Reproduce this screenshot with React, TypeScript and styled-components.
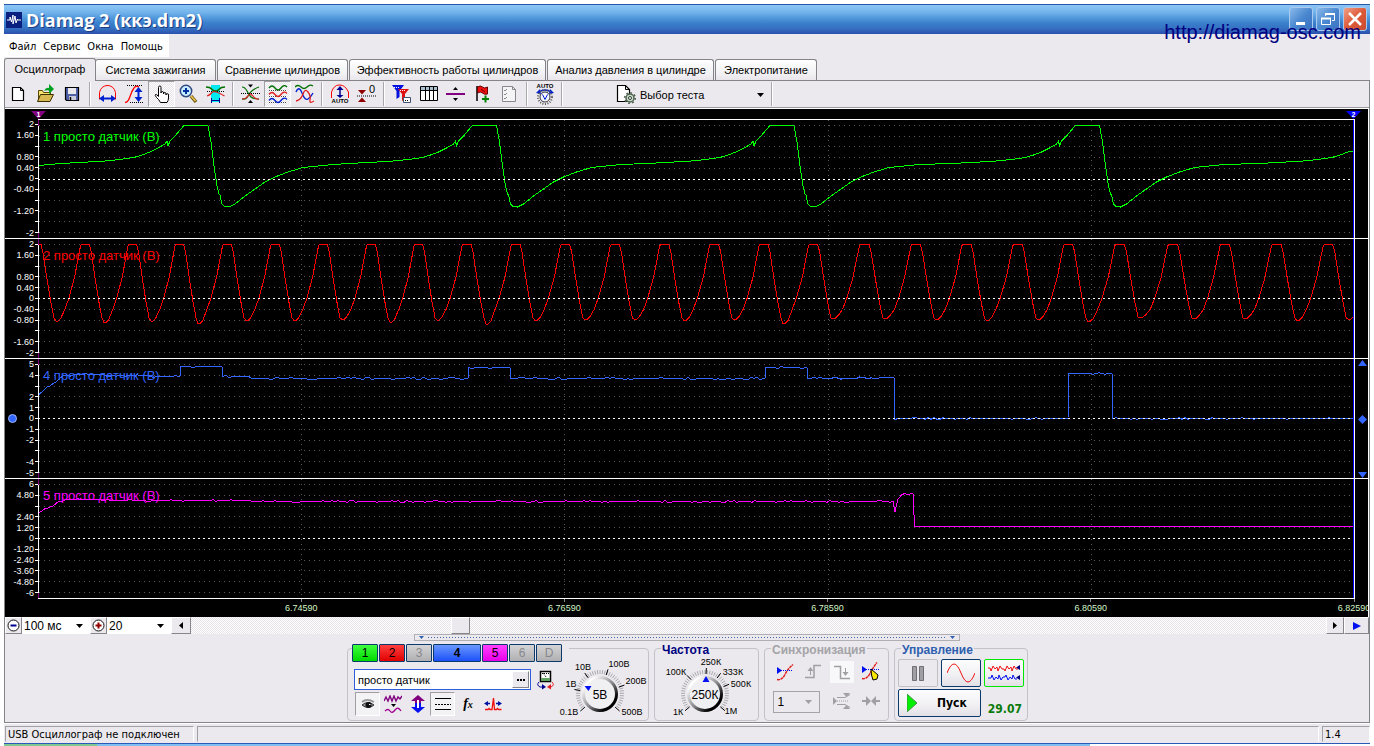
import React from 'react';
import styled, { createGlobalStyle, css } from 'styled-components';

const face = '#ebe9ed';
const sans = '"Liberation Sans", Arial, sans-serif';
const tahoma = '"DejaVu Sans Condensed", "DejaVu Sans", Tahoma, sans-serif';

const dither = css`
  background: repeating-conic-gradient(#ffffff 0 25%, #e6e4e8 0 50%) 0 0 / 2px 2px;
`;
const raised = css`
  background: ${face};
  border: 1px solid;
  border-color: #ffffff #85858a #85858a #ffffff;
`;

const GlobalStyle = createGlobalStyle`
  * { box-sizing: border-box; }
  body { margin: 0; background: #ffffff; font: 11px ${sans}; color: #000000; }
  button, input, select { font: inherit; color: inherit; margin: 0; padding: 0; }
  button { cursor: default; }
  svg { display: block; }
`;

/* ---------- window frame ---------- */

const Frame = styled.div`
  position: relative;
  margin: 4px 4px 0;
  background: ${face};
  min-width: 1100px;
`;
const TitleBar = styled.header`
  display: flex;
  align-items: center;
  height: 30px;
  padding: 0 3px 0 2px;
  border-top: 1px solid #2a56a8;
  background: linear-gradient(#8cc6f4, #74b4ec 25%, #559cde 42%, #3a80cc 62%, #3672c2 80%, #2a4fae 100%);
`;
const Title = styled.h1`
  flex: 1;
  margin: 0 0 0 4px;
  font: 700 18px/26px 'Open Sans', 'Noto Sans', sans-serif;
  color: #ffffff;
  text-shadow: 1px 1px 0 #1a3c80;
`;
const WindowButtons = styled.div`
  display: flex;
  gap: 3px;
  padding-bottom: 2px;
`;
const WindowButton = styled.button<{ $close?: boolean }>`
  width: 24px;
  height: 24px;
  display: grid;
  place-items: center;
  border: 1px solid #a9c9ee;
  border-radius: 3px;
  background: ${p => (p.$close
    ? 'linear-gradient(135deg, #f0a088, #dd5a38 50%, #c84a30)'
    : 'linear-gradient(135deg, #8abaea, #4a88d0 50%, #3a70c0)')};
`;
const SiteLink = styled.a`
  position: absolute;
  top: 17px;
  right: 9px;
  font: 20px/22px ${sans};
  color: #000080;
  text-decoration: none;
`;
const MenuRow = styled.nav`
  height: 24px;
  display: flex;
`;
const MenuBar = styled.div`
  display: flex;
  align-items: center;
  gap: 7px;
  height: 23px;
  padding: 3px 6px 0 5px;
  background: #ffffff;
`;
const MenuItem = styled.button`
  border: 0;
  background: none;
  font: 11px/16px ${tahoma};
`;

/* ---------- tabs ---------- */

const TabList = styled.div`
  display: flex;
  align-items: flex-end;
  gap: 1px;
  height: 23px;
  border-bottom: 1px solid #848488;
`;
const Tab = styled.button<{ $w: number; $active?: boolean }>`
  width: ${p => p.$w}px;
  height: ${p => (p.$active ? 23 : 21)}px;
  margin-bottom: ${p => (p.$active ? -1 : 0)}px;
  margin-right: ${p => (p.$active ? -2 : 0)}px;
  padding: ${p => (p.$active ? '0 0 3px' : '0')};
  border: 1px solid #848488;
  border-bottom: 0;
  border-radius: 3px 3px 0 0;
  background: ${p => (p.$active ? face : 'linear-gradient(#ffffff, #f1f0f3 70%, #e8e6ea)')};
  white-space: nowrap;
`;

/* ---------- toolbar ---------- */

const Page = styled.main`
  border: solid #848488;
  border-width: 0 1px;
`;
const Toolbar = styled.div`
  display: flex;
  align-items: center;
  height: 27px;
  border-bottom: 1px solid #9a9a9e;
`;
const ToolButton = styled.button<{ $on?: boolean }>`
  width: 27px;
  height: 26px;
  display: grid;
  place-items: center;
  border: 1px solid transparent;
  background: none;
  ${p => p.$on && css`
    ${dither}
    border-color: #a0a0a4 #ffffff #ffffff #a0a0a4;
  `}
`;
const Separator = styled.span`
  width: 2px;
  height: 24px;
  margin: 0 3px;
  border-left: 1px solid #a8a8ac;
  border-right: 1px solid #ffffff;
`;
const TestPicker = styled.label`
  display: flex;
  align-items: center;
  gap: 4px;
  width: 202px;
  padding-left: 50px;
`;
const PickerWrap = styled.span`
  display: flex;
  align-items: center;
  flex: 1;
  padding: 2px 4px 0 0;
`;
const PlainSelect = styled.select`
  flex: 1;
  min-width: 0;
  height: 16px;
  border: 0;
  appearance: none;
  background: none;
  outline: 0;
`;

/* ---------- oscilloscope ---------- */

const Scope = styled.section`
  border-top: 1px solid #ffffff;
  border-right: 1px solid #ffffff;
  background: #000000;
  overflow: hidden;
`;
const FlagStrip = styled.div`
  display: flex;
  justify-content: space-between;
  align-items: flex-end;
  height: 10px;
  padding: 0 7px 0 26px;
`;
const ChannelRow = styled.div`
  display: grid;
  grid-template-columns: 33px 1fr 13px;
  height: 120px;
`;
const AxisCell = styled.div<{ $last?: boolean }>`
  display: flex;
  align-items: center;
  border-bottom: 1px solid ${p => (p.$last ? '#000000' : '#ffffff')};
`;
const Marker = styled.span`
  width: 8px;
  margin-left: 3px;
`;
const Scale = styled.ol`
  flex: 1;
  display: flex;
  flex-direction: column;
  height: 100%;
  margin: 0;
  padding: 0;
  list-style: none;
`;
const ScaleMark = styled.li`
  flex: 1;
  min-height: 0;
  display: flex;
  align-items: center;
  justify-content: flex-end;
  color: #ffffff;
  font: 9px/10px ${sans};
  white-space: nowrap;
  &::after {
    content: '';
    width: 3px;
    height: 1px;
    margin-left: 1px;
    background: #ffffff;
  }
`;
const PlotCell = styled.div<{ $first?: boolean }>`
  position: relative;
  min-width: 0;
  border-top: ${p => (p.$first ? '1px solid #ffffff' : '0')};
  border-right: 1px solid #ffffff;
  border-bottom: 1px solid #ffffff;
`;
const PlotSvg = styled.svg`
  width: 100%;
  height: 100%;
  shape-rendering: crispEdges;
  fill: none;
  path, line { vector-effect: non-scaling-stroke; }
`;
const ChannelName = styled.span<{ $color: string }>`
  position: absolute;
  left: 5px;
  top: 9px;
  font: 13px/16px ${sans};
  color: ${p => p.$color};
`;
const Gutter = styled.div<{ $last?: boolean }>`
  display: flex;
  flex-direction: column;
  align-items: center;
  justify-content: space-between;
  padding: 1px 0 0 2px;
  border-bottom: 1px solid ${p => (p.$last ? '#000000' : '#ffffff')};
`;
const TimeAxis = styled.div`
  display: grid;
  grid-template-columns: repeat(5, 1fr);
  height: 18px;
  padding: 0 14px 0 33px;
`;
const TimeMark = styled.span`
  display: flex;
  flex-direction: column;
  align-items: center;
  width: 40px;
  margin-right: -20px;
  justify-self: end;
  color: #d4f4c8;
  font: 9px/10px ${sans};
  &::before {
    content: '';
    width: 1px;
    height: 3px;
    margin-bottom: 1px;
    background: #888888;
  }
`;

/* ---------- scroll row ---------- */

const ScrollRow = styled.div`
  display: flex;
  height: 17px;
`;
const SmallButton = styled.button<{ $w: number }>`
  ${raised}
  width: ${p => p.$w}px;
  height: 17px;
  flex: none;
  display: grid;
  place-items: center;
`;
const SelectBox = styled.label<{ $w: number }>`
  display: flex;
  align-items: center;
  width: ${p => p.$w}px;
  padding: 0 7px 0 2px;
  background: #ffffff;
  font-size: 12px;
`;
const Track = styled.div`
  ${dither}
  flex: 1;
  display: flex;
`;
const TrackGap = styled.span<{ $grow: number }>`
  flex: ${p => p.$grow} 0 0;
`;
const Thumb = styled.span`
  ${raised}
  width: 19px;
`;

/* ---------- control panel ---------- */

const Controls = styled.section`
  display: flex;
  flex-direction: column;
  align-items: center;
  height: 89px;
  border-bottom: 1px solid #848488;
`;
const Splitter = styled.div`
  display: flex;
  align-items: center;
  gap: 4px;
  width: 546px;
  height: 7px;
  padding: 0 4px;
  border: 1px solid #b0b0b4;
`;
const Dots = styled.span`
  flex: 1;
  height: 1px;
  background: repeating-linear-gradient(90deg, #3f68b0 0 1px, transparent 1px 3px);
`;
const Groups = styled.div`
  display: flex;
  align-items: flex-end;
  gap: 5px;
  height: 80px;
  padding-left: 1px;
`;
const ChannelGroup = styled.section`
  display: flex;
  width: 302px;
  height: 73px;
  border: 1px solid #c2c2c8;
  border-radius: 4px;
`;
const ChannelLeft = styled.div`
  width: 207px;
  flex: none;
  padding-left: 4px;
`;
const ChannelTabs = styled.div`
  display: flex;
  gap: 1px;
  width: 217px;
  margin-top: -5px;
  background: ${face};
`;
const ChannelTab = styled.button<{ $from: string; $to: string; $wide?: boolean; $off?: boolean }>`
  width: ${p => (p.$wide ? 48 : 26)}px;
  height: 18px;
  border: 1px solid #0a3a6c;
  border-radius: 1px;
  background: linear-gradient(${p => p.$from}, ${p => p.$to});
  font: ${p => (p.$wide ? 700 : 400)} 12px/14px ${sans};
  color: ${p => (p.$off ? '#88888c' : '#000000')};
`;
const NameRow = styled.div`
  display: flex;
  align-items: center;
  gap: 5px;
  margin: 7px 0 2px 2px;
`;
const NameField = styled.div`
  display: flex;
  align-items: center;
  width: 177px;
  height: 21px;
  padding: 1px;
  border: 1px solid #2f5fd8;
  background: #ffffff;
`;
const NameInput = styled.input`
  flex: 1;
  min-width: 0;
  padding-left: 2px;
  border: 0;
  outline: 0;
  background: none;
`;
const DotsButton = styled.button`
  ${raised}
  width: 17px;
  height: 17px;
  display: grid;
  place-items: center;
`;
const ChannelTools = styled.div`
  display: flex;
  padding-left: 3px;
`;
const ChannelTool = styled.button<{ $on?: boolean }>`
  width: 25px;
  height: 24px;
  display: grid;
  place-items: center;
  border: 1px solid transparent;
  background: none;
  ${p => p.$on && css`
    background: #f3f2f5;
    border-color: #a0a0a4 #ffffff #ffffff #a0a0a4;
  `}
`;
const Group = styled.fieldset<{ $w: number }>`
  width: ${p => p.$w}px;
  height: 80px;
  min-width: 0;
  margin: 0;
  padding: 0;
  border: 1px solid #c2c2c8;
  border-radius: 4px;
`;
const Legend = styled.legend<{ $color: string }>`
  height: 14px;
  margin-left: 6px;
  padding: 2px 1px 0;
  font: 700 12px/14px ${sans};
  color: ${p => p.$color};
`;
const KnobSvg = styled.svg`
  font: 9px ${sans};
`;
const SyncGrid = styled.div`
  display: grid;
  grid-template-columns: 28px 28px 30px 28px;
  justify-items: center;
  align-items: center;
  grid-template-rows: 30px 28px;
  padding: 2px 0 0 6px;
`;
const SyncButton = styled.button<{ $on?: boolean }>`
  width: 24px;
  height: 22px;
  display: grid;
  place-items: center;
  border: 0;
  background: ${p => (p.$on ? '#f8f8fa' : 'none')};
`;
const SyncSelect = styled.label`
  grid-column: span 2;
  display: flex;
  align-items: center;
  width: 47px;
  height: 22px;
  padding: 0 7px 0 4px;
  margin: 2px 6px 0 0;
  border: 1px solid #a4a4a8;
  font-size: 12px;
`;
const RunGrid = styled.div`
  display: grid;
  grid-template-columns: 40px 40px 40px;
  grid-template-rows: 28px 28px;
  gap: 2px 3px;
  padding: 4px 0 0 3px;
`;
const RunButton = styled.button<{ $edge: string; $span?: boolean }>`
  grid-column: span ${p => (p.$span ? 2 : 1)};
  display: flex;
  align-items: center;
  justify-content: ${p => (p.$span ? 'flex-start' : 'center')};
  gap: 19px;
  padding-left: ${p => (p.$span ? 8 : 0)}px;
  border: 1px solid ${p => p.$edge};
  border-radius: 2px;
  background: linear-gradient(#fdfdfe, #f0eff2 60%, #e2e0e6);
  font: 700 12px/16px ${tahoma};
`;
const PauseButton = styled(RunButton)`
  background: ${face};
`;
const Reading = styled.output`
  align-self: center;
  justify-self: end;
  padding: 12px 2px 0 0;
  font: 700 12px/16px ${tahoma};
  color: #0a7a0a;
`;

/* ---------- status bar ---------- */

const StatusBar = styled.footer`
  display: flex;
  gap: 3px;
  height: 20px;
  padding: 2px 0 1px 1px;
  border-top: 1px solid #ffffff;
`;
const StatusCell = styled.div<{ $w?: number }>`
  flex: ${p => (p.$w ? `0 0 ${p.$w}px` : '1')};
  padding-left: 2px;
  border: 1px solid;
  border-color: #a0a0a4 #ffffff ${face} #a0a0a4;
  font: 11px/15px ${tahoma};
`;
const Taskbar = styled.div`
  display: flex;
  height: 4px;
  border-top: 1px solid #2c58b8;
  background: #ffffff;
`;
const TaskPart = styled.span<{ $grow: number; $color: string }>`
  flex: ${p => p.$grow} 0 0;
  background: ${p => p.$color};
`;

/* ---------- wave data (plot units: x 0..1316, y from the row top) ---------- */

type Pt = [number, number];

const toPath = (pts: Pt[]) => 'M' + pts.map(([x, y]) => `${x.toFixed(1)} ${y.toFixed(1)}`).join('L');

function crankWave(): Pt[] {
  const rise: Pt[] = [[-148, 43.5], [-128, 42.5], [-103, 41], [-88, 39.5], [-74, 37.5], [-66, 35], [-58, 32],
    [-50, 28], [-43, 24], [-41, 21], [-40, 26], [-38, 21], [-33, 16], [-28, 10], [-24, 5.5]];
  const fall: Pt[] = [[0, 5.5], [3, 22], [6, 46], [9, 66], [11, 74], [12, 75], [14, 84], [16, 86], [21, 87], [27, 84],
    [37, 76], [47, 69], [57, 62], [67, 57], [80, 52], [95, 47.5], [110, 46], [125, 44.5]];
  const pts: Pt[] = [[1, 45.5]];
  [170, 458.5, 756, 1061.5, 1368].forEach((t, i) => {
    rise.forEach(([dx, y]) => t + dx > pts[pts.length - 1][0] && pts.push([t + dx, y]));
    if (i < 4) fall.forEach(([dx, y]) => pts.push([t + dx, y]));
  });
  return [...pts.filter(([x]) => x < 1314), [1315, 31]];
}

function camWave(): Pt[] {
  const troughs: Pt[] = [[19, 82], [67, 83.5], [114, 82], [161, 84.5], [209, 81.5], [257, 81.5], [305, 80.5],
    [353, 83], [400, 81], [449, 85], [498, 81.5], [548, 80.5], [597.5, 80.5], [647, 81.5], [697, 80.5], [746, 84.5],
    [796, 79.5], [848, 79.5], [899, 80.5], [949.5, 81.5], [1001, 80.5], [1051, 82.5], [1103.5, 78.5], [1157, 79.5],
    [1208, 79.5], [1260, 81.5], [1311.5, 80.5], [1363, 80.5]];
  const pts: Pt[] = [[1, 5.5], [3, 5.5], [5, 14], [9, 40], [13, 64], [16, 79]];
  troughs.slice(0, -1).forEach(([x, y], i) => {
    const k = (troughs[i + 1][0] - x) / 49;
    const at = (dx: number, v: number) => pts.push([x + dx * k, v]);
    at(-1, y); at(1, y); at(4, y - 3); at(8, 70.5); at(12, 59.5); at(18, 38); at(22, 17); at(24, 7);
    at(25, 5.5); at(33, 5.5); at(35, 13); at(39, 40); at(43, 64); at(46, 79);
  });
  return pts.filter(([x]) => x < 1316);
}

function noisy(keys: Pt[], amp: (x: number) => number): Pt[] {
  let seed = 7;
  const rand = () => (seed = (seed * 16807) % 2147483647) / 2147483647;
  const pts: Pt[] = [];
  keys.forEach(([x, y], i) => {
    pts.push([x, y]);
    const next = keys[i + 1];
    if (!next) return;
    for (let s = x + 3; s < next[0] - 1; s += 3) {
      const base = y + ((next[1] - y) * (s - x)) / (next[0] - x);
      pts.push([s, base + (rand() > 0.72 ? (rand() > 0.5 ? 1 : -1) * amp(s) : 0)]);
    }
  });
  return pts;
}

const wave4 = noisy([[1, 35.5], [6, 31], [12, 27], [22, 19], [26, 16.5], [42, 15.5], [90, 16.5], [140, 17.5], [142, 17.5],
  [143, 7.5], [184, 7.5], [185, 17.5], [207, 17.5], [215, 19.5], [250, 19.5], [430, 19.5], [431, 8.5], [472, 8.5], [473, 19.5],
  [727, 19.5], [728, 8.5], [769, 8.5], [770, 19.5], [856, 18.5], [857, 60.5], [860, 59.5], [1029, 59.5], [1030, 59],
  [1031, 14.5], [1074, 14.5], [1075, 59.5], [1316, 59.5]], x => (x > 857 ? 0.7 : 1.1));

const wave5 = noisy([[1, 33.5], [12, 28], [22, 22], [28, 20.5], [50, 20.5], [100, 21.5], [207, 21.5], [222, 22.5], [855, 22.5],
  [857, 32.5], [860, 20], [864, 15.5], [875, 15], [876, 36], [877, 47.5], [1316, 47.5]], x => (x > 876 ? 0 : 0.9));

interface Channel {
  name: string;
  color: string;
  marks: string[];
  pts: Pt[];
}

const channels: Channel[] = [
  { name: '1 просто датчик (В)', color: '#00ff00', pts: crankWave(),
    marks: ['2', '1.60', '', '0.80', '0.40', '0', '-0.40', '', '-1.20', '', '-2'] },
  { name: '2 просто датчик (В)', color: '#ff0000', pts: camWave(),
    marks: ['2', '1.60', '', '0.80', '0.40', '0', '-0.40', '-0.80', '', '-1.60', '-2'] },
  { name: '4 просто датчик (В)', color: '#3366ff', pts: wave4,
    marks: ['5', '4', '', '2', '1', '0', '-1', '-2', '', '-4', '-5'] },
  { name: '5 просто датчик (В)', color: '#ff00ff', pts: wave5,
    marks: ['6', '4.80', '', '2.40', '1.20', '0', '-1.20', '-2.40', '-3.60', '-4.80', '-6'] },
];

function ScopeRow({ ch, index }: { ch: Channel; index: number }) {
  const first = index === 0;
  const last = index === channels.length - 1;
  const selected = index === 2;
  const h = first ? 118 : 119;
  const rows = ch.marks.map((_, i) => Math.floor(((i + 0.5) * h) / 11) + 0.5);
  return (
    <ChannelRow>
      <AxisCell $last={last}>
        <Marker>
          {selected && (
            <svg width="9" height="9" viewBox="0 0 9 9"><circle cx="4.5" cy="4.5" r="4" fill="#3366ff" stroke="#a0b8f8" /></svg>
          )}
        </Marker>
        <Scale>{ch.marks.map((m, i) => <ScaleMark key={i}>{m}</ScaleMark>)}</Scale>
      </AxisCell>
      <PlotCell $first={first}>
        <PlotSvg viewBox={`0 0 1316 ${h}`} preserveAspectRatio="none" aria-label={ch.name}>
          {rows.map((y, i) => i !== 5 && (
            <line key={i} x1="1" x2="1315" y1={y} y2={y} stroke="#585858" strokeDasharray="1 4" />
          ))}
          {[263.5, 526.5, 790.5, 1053.5].map(x => (
            <line key={x} x1={x} x2={x} y1="0" y2={h} stroke="#585858" strokeDasharray="1 4" />
          ))}
          <line x1="0.5" x2="0.5" y1="0" y2={h} stroke="#800080" />
          <line x1="0.5" x2="0.5" y1={rows[0]} y2={rows[10]} stroke="#ffffff" />
          <path d={toPath(ch.pts)} stroke={ch.color} />
          <line x1="0" x2="1315" y1={rows[5]} y2={rows[5]} stroke="#ffffff" strokeDasharray="2 3" />
          <line x1="1315.5" x2="1315.5" y1="0" y2={h} stroke="#0000ff" />
        </PlotSvg>
        <ChannelName $color={ch.color}>{ch.name}</ChannelName>
      </PlotCell>
      <Gutter $last={last}>
        {selected && (
          <>
            <svg width="9" height="6"><path d="M4.5 0L9 6H0z" fill="#3366ff" /></svg>
            <svg width="9" height="9"><path d="M4.5 0L9 4.5 4.5 9 0 4.5z" fill="#3366ff" /></svg>
            <svg width="9" height="6"><path d="M0 0H9L4.5 6z" fill="#3366ff" /></svg>
          </>
        )}
      </Gutter>
    </ChannelRow>
  );
}

/* ---------- icons ---------- */

const Icon = ({ children, w = 20, h = 20 }: { children: React.ReactNode; w?: number; h?: number }) => (
  <svg width={w} height={h} viewBox={`0 0 ${w} ${h}`} fill="none" stroke="#000" aria-hidden="true">{children}</svg>
);
const Caret = ({ color = '#000' }: { color?: string }) => (
  <svg width="7" height="4" viewBox="0 0 7 4" aria-hidden="true"><path d="M0 0h7L3.5 4z" fill={color} /></svg>
);

const NewIcon = () => <Icon><path d="M3.500 3.500h8l3 3v10h-11z" fill="#fff" strokeWidth="1.200" /><path d="M11.500 3.500v3h3" /></Icon>;
const OpenIcon = () => (
  <Icon>
    <path d="M2.500 17V6.500h4l1 2h7v3" fill="#f5e070" stroke="#5a4a00" />
    <path d="M1.500 17.500l3-7h13l-3.500 7z" fill="#d8b850" stroke="#3a3000" />
    <path d="M8 7q2-4 5-3V0l5 5-5 5V6.500q-3-.5-5 .5z" fill="#00a020" stroke="none" />
  </Icon>
);
const SaveIcon = () => (
  <Icon>
    <path d="M2.500 3.500h13v13h-12l-1-1z" fill="#5060a8" strokeWidth="1.200" />
    <path d="M5 4h8v6H5z" fill="#e8e8ec" stroke="none" />
    <path d="M6 12h7v4H6z" fill="#c8ccd8" stroke="none" /><path d="M7.500 13v3" strokeWidth="1.500" />
  </Icon>
);
const PeriodIcon = () => (
  <Icon>
    <path d="M1.500 15.500V8.500Q3 2 9 1.500h1Q16 2 17.500 8.500v7" stroke="#f00" />
    <path d="M3 14.500h13" stroke="#0020d0" strokeWidth="2" /><path d="M1 14.500l5-3.500v7zM18 14.500l-5-3.500v7z" fill="#0020d0" stroke="none" />
  </Icon>
);
const AmplitudeIcon = () => (
  <Icon>
    <path d="M2 1.500h16M5 18.500h13" strokeDasharray="1 1" />
    <path d="M0 18.500q3 0 5-6t4-8.500Q11 1 14 3" stroke="#f00" strokeWidth="1.300" />
    <path d="M13.500 5v11" stroke="#0020d0" strokeWidth="2" /><path d="M13.500 3l4 5h-8zM13.500 18l4-5h-8z" fill="#0020d0" stroke="none" />
  </Icon>
);
const HandIcon = () => (
  <Icon>
    <path d="M6.500 12V3.500q0-1.500 1.300-1.500T9 3.500V9q0-1.500 1.300-1.500T11.500 9v1q0-1.500 1.300-1.500T14 10v1q0-1.300 1.300-1.300T16.500 11v3q0 2.500-1.500 4.500H8.500Q7 15.500 4.500 13.500 2.500 11 3.500 10.500q1-.5 3 2z" fill="#fff" />
  </Icon>
);
const ZoomIcon = () => (
  <Icon>
    <path d="M12 12l5 6" stroke="#705810" strokeWidth="3.500" /><path d="M12 12l4.500 5" stroke="#f0c850" strokeWidth="1.500" />
    <circle cx="7" cy="7" r="5.700" fill="#c8ecff" stroke="#304880" strokeWidth="1.500" />
    <path d="M4 7h6M7 4v6" stroke="#0030a0" strokeWidth="2" />
  </Icon>
);
const FilterWaveIcon = () => (
  <Icon>
    <path d="M5 1h9v17H5z" fill="#00e8f0" stroke="none" />
    <path d="M0 3q4 0 5.500 2t4 2 4-2T19 3" stroke="#007000" strokeWidth="1.300" />
    <path d="M1 7.500h18" strokeDasharray="1 1" />
    <path d="M1 12q3-1 4.500-3T10 8t4 1.500 4.500 2.500" stroke="#e02020" strokeWidth="1.300" />
    <path d="M5.500 16.500h8M5.500 14v5M13.500 14v5" stroke="#000090" />
  </Icon>
);
const CrossWaveIcon = () => (
  <Icon>
    <path d="M1 3q3 0 5 4t4 6 8 2" stroke="#007000" strokeWidth="1.200" />
    <path d="M1 15q4 1 6-3t5-6 6-3" stroke="#007000" strokeWidth="1.200" />
    <path d="M1 15q4 0 6-3l2-2.500 3 2.500q3 4 6 3" stroke="#e02020" strokeWidth="1.200" />
    <path d="M0 9.500h19" strokeDasharray="1 1" />
    <path d="M7 .500h5l-2.500 3zM7 19h5l-2.500-3z" fill="#000" stroke="none" />
  </Icon>
);
const StackWaveIcon = () => (
  <Icon>
    <path d="M1 4q3-4 6 0t6 0 6-1" stroke="#007000" strokeWidth="1.300" />
    <path d="M1 6.500h18M1 12.500h18M1 18.500h18" stroke="#444" strokeDasharray="1 1" />
    <path d="M1 10.500q3-4 6 0t6 0 6-1" stroke="#e02020" strokeWidth="1.300" />
    <path d="M1 16.500q3-4 6 0t6 0 6-1" stroke="#0020d0" strokeWidth="1.300" />
  </Icon>
);
const OverlapWaveIcon = () => (
  <Icon>
    <path d="M0 3q3-3 6 0t6 0 6-1" stroke="#007000" strokeWidth="1.300" />
    <path d="M1 8q3-7 6 1t6 6 5-6" stroke="#0020d0" strokeWidth="1.300" />
    <path d="M1 17q5-1 7-7t5-2 2 8 4 1" stroke="#e02020" strokeWidth="1.300" />
  </Icon>
);
const AutoText = ({ y }: { y: number }) => (
  <text x="10" y={y} textAnchor="middle" fontFamily="Liberation Sans, sans-serif" fontWeight="700" fontSize="6" fill="#000" stroke="none">AUTO</text>
);
const AutoScaleIcon = () => (
  <Icon>
    <path d="M1.500 14V8Q4 1 9 1h1q5 0 8.500 7v6" stroke="#f00" />
    <path d="M10 5v7" stroke="#000090" strokeWidth="1.500" /><path d="M10 2l3.500 4h-7zM10 14l3.500-3h-7z" fill="#000090" stroke="none" />
    <AutoText y={19} />
  </Icon>
);
const ZeroIcon = () => (
  <Icon>
    <path d="M1 6h8l-4 4.500zM1 18h8l-4-4.500z" fill="#900000" stroke="none" />
    <path d="M0 12h19" strokeDasharray="1 1" />
    <text x="15" y="9" textAnchor="middle" fontFamily="Liberation Sans, sans-serif" fontSize="11" fill="#000" stroke="none">0</text>
  </Icon>
);
const FunnelsIcon = () => (
  <Icon>
    <path d="M0 1h12L7.500 7v6l-3 2V7z" fill="#0010e0" stroke="none" />
    <path d="M6 5h11l-4 5v5l-3 2v-7z" fill="#e01010" stroke="none" />
    <path d="M2 3.500h5M8 6.500h5" stroke="#fff" strokeDasharray="1 1" />
    <path d="M11.500 13.500h7v5h-7z" fill="#fff" stroke="#405070" /><path d="M13 16.500h4" strokeDasharray="1 1" />
  </Icon>
);
const TableIcon = () => (
  <Icon>
    <path d="M1.500 2.500h17v14h-17z" fill="#fff" /><path d="M2 3h16v3H2z" fill="#a8c0d0" stroke="none" />
    <path d="M1 6.500h18M6.500 3v14M10.500 3v14M14.500 3v14" />
  </Icon>
);
const SplitIcon = () => (
  <Icon>
    <path d="M0 10h19" stroke="#800080" strokeWidth="2" />
    <path d="M7 6h5l-2.500-3zM7 14h5l-2.500 3z" fill="#000" stroke="none" />
  </Icon>
);
const FlagIcon = () => (
  <Icon>
    <path d="M4 2v15" strokeWidth="1.500" /><path d="M4.500 3q3-2 5 0t5 0v7q-3 1-5-1t-5 0z" fill="#f01010" stroke="#600" />
    <path d="M8 5l4 3" stroke="#600" /><path d="M12.500 11.500v7M9 15h7" stroke="#008000" strokeWidth="2" />
  </Icon>
);
const ChecklistIcon = () => (
  <Icon>
    <path d="M2.500 2.500h10l3 3v12h-13z" fill="#f4f4f6" stroke="#88888c" /><path d="M12.500 2.500v3h3" stroke="#88888c" />
    <path d="M4 6l1 1 2-2M4 10l1 1 2-2M4 14l1 1 2-2" stroke="#88888c" />
  </Icon>
);
const AutoKnobIcon = () => (
  <svg width="20" height="24" viewBox="0 0 20 24" fill="none" aria-hidden="true">
    <AutoText y={6} />
    <path d="M4 10q6-4 12 0" stroke="#0020d0" strokeWidth="1.500" /><path d="M1 11l4-4 1 5zM19 11l-4-4-1 5z" fill="#0020d0" />
    <circle cx="10" cy="15" r="7" stroke="#555" strokeWidth="2" strokeDasharray="1 1.500" />
    <circle cx="10" cy="15" r="5" fill="#f4f8ff" stroke="#333" />
    <path d="M7.500 12.500L10 17.500l2.500-5" stroke="#0020d0" />
  </svg>
);
const TestIcon = () => (
  <Icon>
    <path d="M1.500 1.500h8l4 4v12h-12z" fill="#fff" strokeWidth="1.200" /><path d="M9.500 1.500v4h4" />
    <circle cx="14" cy="14" r="4" fill="#c8dcc8" stroke="#506050" strokeWidth="1.500" />
    <circle cx="14" cy="14" r="5.300" stroke="#506050" strokeWidth="1.500" strokeDasharray="1.800 2.300" />
    <circle cx="14" cy="14" r="1.500" fill="#fff" stroke="#304030" />
  </Icon>
);
const RoundIcon = ({ plus }: { plus?: boolean }) => (
  <svg width="13" height="13" viewBox="0 0 13 13" fill="none" aria-hidden="true">
    <circle cx="6.500" cy="6.500" r="5.500" fill="#fff" stroke="#111" />
    <path d={plus ? 'M3.500 6.500h6M6.500 3.500v6' : 'M3.500 6.500h6'} stroke={plus ? '#900000' : '#000090'} strokeWidth="2" />
  </svg>
);

/* ---------- rotary switches ---------- */

interface KnobProps {
  view: string;
  cx: number;
  cy: number;
  value: string;
  labels: [string, number, number, number][];
  pointer: string;
}

function Knob({ view, cx, cy, value, labels, pointer }: KnobProps) {
  const [, , w, h] = view.split(' ').map(Number);
  const ray = (deg: number, r1: number, r2: number) => {
    const a = (deg * Math.PI) / 180;
    return `M${cx + r1 * Math.sin(a)} ${cy - r1 * Math.cos(a)}L${cx + r2 * Math.sin(a)} ${cy - r2 * Math.cos(a)}`;
  };
  const minor = Array.from({ length: 41 }, (_, i) => ray(-126 + i * 6.3, 20, 24)).join('');
  const id = `knob${cx}`;
  return (
    <KnobSvg width={w} height={h} viewBox={view} role="img" aria-label={value}>
      <defs>
        <linearGradient id={id} x1="0" y1="0" x2="1" y2="1">
          <stop offset="0.15" stopColor="#ffffff" /><stop offset="0.5" stopColor="#909094" /><stop offset="0.8" stopColor="#000000" />
        </linearGradient>
      </defs>
      <path d={minor} stroke="#a8a8ac" />
      <path d={labels.map(l => ray(l[3], 20, 26)).join('')} stroke="#000" />
      <circle cx={cx} cy={cy} r="16.500" fill="#f0eff2" stroke={`url(#${id})`} strokeWidth="3" />
      <path d={pointer} fill="#0010f0" />
      <text x={cx} y={cy + 5} textAnchor="middle" fontSize="12">{value}</text>
      {labels.map(([t, x, y]) => <text key={t} x={x} y={y + 3} textAnchor="middle">{t}</text>)}
    </KnobSvg>
  );
}

/* ---------- page ---------- */

const tabs: [string, number][] = [
  ['Осциллограф', 92], ['Система зажигания', 121], ['Сравнение цилиндров', 131],
  ['Эффективность работы цилиндров', 197], ['Анализ давления в цилиндре', 167], ['Электропитание', 102],
];

const toolGroups: { label: string; icon: React.ReactNode; on?: boolean }[][] = [
  [{ label: 'Новый', icon: <NewIcon /> }, { label: 'Открыть', icon: <OpenIcon /> }, { label: 'Сохранить', icon: <SaveIcon /> }],
  [{ label: 'Период', icon: <PeriodIcon /> }, { label: 'Амплитуда', icon: <AmplitudeIcon /> },
    { label: 'Рука', icon: <HandIcon />, on: true }, { label: 'Лупа', icon: <ZoomIcon /> }, { label: 'Фильтр', icon: <FilterWaveIcon /> }],
  [{ label: 'Центр', icon: <CrossWaveIcon /> }, { label: 'Раздельно', icon: <StackWaveIcon />, on: true },
    { label: 'Вместе', icon: <OverlapWaveIcon /> }],
  [{ label: 'Автомасштаб', icon: <AutoScaleIcon /> }, { label: 'Ноль', icon: <ZeroIcon /> }],
  [{ label: 'Фильтры', icon: <FunnelsIcon /> }, { label: 'Таблица', icon: <TableIcon /> }, { label: 'Разделить', icon: <SplitIcon /> },
    { label: 'Метка', icon: <FlagIcon /> }, { label: 'Список', icon: <ChecklistIcon /> }],
  [{ label: 'Автонастройка', icon: <AutoKnobIcon /> }],
];

const channelTabs: { t: string; from: string; to: string; wide?: boolean; off?: boolean }[] = [
  { t: '1', from: '#40ff40', to: '#00d800' },
  { t: '2', from: '#ff4040', to: '#e00000' },
  { t: '3', from: '#d4d4d6', to: '#b0b0b2', off: true },
  { t: '4', from: '#6a98ff', to: '#1c50f8', wide: true },
  { t: '5', from: '#ff40ff', to: '#e800e8' },
  { t: '6', from: '#d4d4d6', to: '#b0b0b2', off: true },
  { t: 'D', from: '#d4d4d6', to: '#b0b0b2', off: true },
];

export default function App() {
  return (
    <>
      <GlobalStyle />
      <Frame>
        <TitleBar>
          <svg width="16" height="16" viewBox="0 0 16 16" fill="none" aria-hidden="true">
            <path d="M0 0h16v16H0z" fill="#0a2080" />
            <path d="M1 8h3V5l1.500 5L7 3v9l2-8 1 7 1.500-4v1H15" stroke="#fff" />
          </svg>
          <Title>Diamag 2 (ккэ.dm2)</Title>
          <WindowButtons>
            <WindowButton aria-label="Свернуть">
              <svg width="16" height="16"><path d="M3 11h9v3H3z" fill="#fff" /></svg>
            </WindowButton>
            <WindowButton aria-label="Восстановить">
              <svg width="16" height="16" fill="none" stroke="#fff">
                <path d="M5.500 5V2.500h9v7H12" /><path d="M5 3h10" strokeWidth="2" />
                <path d="M1.500 7.500h9v6h-9z" /><path d="M1 7.500h10" strokeWidth="2" />
              </svg>
            </WindowButton>
            <WindowButton aria-label="Закрыть" $close>
              <svg width="16" height="16"><path d="M2 2l12 12M14 2L2 14" stroke="#fff" strokeWidth="2.500" /></svg>
            </WindowButton>
          </WindowButtons>
        </TitleBar>
        <SiteLink href="#site">http://diamag-osc.com</SiteLink>
        <MenuRow>
          <MenuBar>
            {['Файл', 'Сервис', 'Окна', 'Помощь'].map(m => <MenuItem key={m}>{m}</MenuItem>)}
          </MenuBar>
        </MenuRow>
        <TabList role="tablist">
          {tabs.map(([t, w], i) => (
            <Tab key={t} role="tab" $w={w} $active={i === 0} aria-selected={i === 0}>{t}</Tab>
          ))}
        </TabList>
        <Page>
          <Toolbar>
            {toolGroups.map((g, i) => (
              <React.Fragment key={i}>
                {g.map(b => <ToolButton key={b.label} aria-label={b.label} $on={b.on}>{b.icon}</ToolButton>)}
                <Separator />
              </React.Fragment>
            ))}
            <TestPicker>
              <TestIcon />
              <PickerWrap>
                <PlainSelect aria-label="Выбор теста"><option>Выбор теста</option></PlainSelect>
                <Caret />
              </PickerWrap>
            </TestPicker>
            <Separator />
          </Toolbar>

          <Scope>
            <FlagStrip>
              <svg width="15" height="9" viewBox="0 0 15 9">
                <path d="M0 1h15L7.500 9z" fill="#800080" />
                <text x="7.500" y="7" textAnchor="middle" fontFamily="Liberation Sans, sans-serif" fontWeight="700" fontSize="7" fill="#fff">1</text>
              </svg>
              <svg width="15" height="9" viewBox="0 0 15 9">
                <path d="M0 1h15L7.500 9z" fill="#0000ff" />
                <text x="7.500" y="7" textAnchor="middle" fontFamily="Liberation Sans, sans-serif" fontWeight="700" fontSize="7" fill="#fff">2</text>
              </svg>
            </FlagStrip>
            {channels.map((ch, i) => <ScopeRow key={ch.name} ch={ch} index={i} />)}
            <TimeAxis>
              {['6.74590', '6.76590', '6.78590', '6.80590', '6.82590'].map(t => <TimeMark key={t}>{t}</TimeMark>)}
            </TimeAxis>
          </Scope>

          <ScrollRow>
            <SmallButton $w={17} aria-label="Уменьшить"><RoundIcon /></SmallButton>
            <SelectBox $w={68}>
              <PlainSelect aria-label="Развёртка"><option>100 мс</option></PlainSelect><Caret />
            </SelectBox>
            <SmallButton $w={17} aria-label="Увеличить"><RoundIcon plus /></SmallButton>
            <SelectBox $w={64}>
              <PlainSelect aria-label="Масштаб"><option>20</option></PlainSelect><Caret />
            </SelectBox>
            <SmallButton $w={20} aria-label="Влево"><svg width="4" height="7"><path d="M4 0v7L0 3.500z" /></svg></SmallButton>
            <Track>
              <TrackGap $grow={260} />
              <Thumb />
              <TrackGap $grow={855} />
            </Track>
            <SmallButton $w={18} aria-label="Вправо"><svg width="4" height="7"><path d="M0 0v7l4-3.500z" /></svg></SmallButton>
            <SmallButton $w={25} aria-label="Воспроизвести"><svg width="8" height="8"><path d="M0 0v8l8-4z" fill="#0010f0" /></svg></SmallButton>
          </ScrollRow>

          <Controls>
            <Splitter>
              <svg width="5" height="3"><path d="M0 0h5L2.500 3z" fill="#2f5fb0" /></svg>
              <Dots />
              <svg width="5" height="3"><path d="M0 0h5L2.500 3z" fill="#2f5fb0" /></svg>
            </Splitter>
            <Groups>
              <ChannelGroup aria-label="Канал">
                <ChannelLeft>
                  <ChannelTabs>
                    {channelTabs.map(c => (
                      <ChannelTab key={c.t} $from={c.from} $to={c.to} $wide={c.wide} $off={c.off}>{c.t}</ChannelTab>
                    ))}
                  </ChannelTabs>
                  <NameRow>
                    <NameField>
                      <NameInput aria-label="Имя датчика" defaultValue="просто датчик" />
                      <DotsButton aria-label="Выбрать датчик">
                        <svg width="8" height="2"><path d="M0 0h2v2H0zM3 0h2v2H3zM6 0h2v2H6z" /></svg>
                      </DotsButton>
                    </NameField>
                    <Icon w={19}>
                      <path d="M4.500 1.500h10v10h-10z" fill="#fff" strokeWidth="1.500" /><path d="M5 8h9v3H5z" fill="#60a060" stroke="none" />
                      <path d="M7 3l3 4M6 3.500h7" strokeDasharray="1 1" />
                      <path d="M3 12q-3 3 1 5h3" stroke="#000090" /><path d="M6 14l4 3-4 2.500z" fill="#000090" stroke="none" />
                      <path d="M16 12q3 3-1 5h-2" stroke="#e02020" /><path d="M15 14l-4 3 4 2.500z" fill="#e02020" stroke="none" />
                    </Icon>
                  </NameRow>
                  <ChannelTools>
                    <ChannelTool $on aria-label="Показать">
                      <Icon h={14} w={16}>
                        <path d="M2 5q5-4 12 0" stroke="#999" strokeWidth="2" />
                        <path d="M2 8q6-5 12 0-6 5-12 0z" fill="#909090" stroke="#333" /><circle cx="8.500" cy="8" r="3" fill="#111" stroke="none" />
                        <path d="M9 7h1.500v1H9z" fill="#fff" stroke="none" />
                      </Icon>
                    </ChannelTool>
                    <ChannelTool aria-label="Сглаживание">
                      <Icon w={18} h={18}>
                        <path d="M0 6l2-4 2 4 2-5 2 5 2-5 2 5 2-4 2 2 2-3" stroke="#800080" strokeWidth="1.400" />
                        <path d="M7 9h5l-2.500 3z" fill="#000" stroke="none" />
                        <path d="M1 16q3-3 5 0t5-1 6 1" stroke="#a00090" strokeWidth="1.300" />
                      </Icon>
                    </ChannelTool>
                    <ChannelTool aria-label="Инверсия">
                      <Icon w={18} h={18}>
                        <path d="M9 0l7 6h-4v4H6V6H2z" fill="#800080" stroke="none" />
                        <path d="M9 18l7-6h-4V8H6v4H2z" fill="#0010f0" stroke="none" />
                        <path d="M9 5v8" stroke="#fff" strokeWidth="2" />
                      </Icon>
                    </ChannelTool>
                    <ChannelTool $on aria-label="Уровни">
                      <Icon w={18} h={14}><path d="M1 1.500h16M1 12.500h16" /><path d="M1 7.500h16" strokeDasharray="2 1" /></Icon>
                    </ChannelTool>
                    <ChannelTool aria-label="Функция">
                      <Icon w={16} h={16}>
                        <text x="8" y="12" textAnchor="middle" fontFamily="Liberation Serif, serif" fontStyle="italic" fontWeight="700" fontSize="14" fill="#000" stroke="none">f<tspan fontSize="10">x</tspan></text>
                      </Icon>
                    </ChannelTool>
                    <ChannelTool aria-label="Импульс">
                      <Icon w={18} h={16}>
                        <path d="M1 13.500h3l1-1 1 1h2L9.500 2l1 11.500h2l1-1 1 1h3" stroke="#f01010" strokeWidth="1.300" />
                        <path d="M3 7.500h3M12 7.500h3" stroke="#0010a0" strokeWidth="1.500" /><path d="M0 7.500L4 5v5zM18 7.500L14 5v5z" fill="#0010a0" stroke="none" />
                      </Icon>
                    </ChannelTool>
                  </ChannelTools>
                </ChannelLeft>
                <Knob view="555 650 93 70" cx={600} cy={695} value="5В" pointer="M584.500 687h7L588.500 692z"
                  labels={[['0.1В', 569, 713, -131], ['1В', 571, 685, -80], ['10В', 583, 668, -36], ['100В', 619, 665, 18],
                    ['200В', 636, 682, 70], ['500В', 632, 713, 131]]} />
              </ChannelGroup>

              <Group $w={105}>
                <Legend $color="#000080">Частота</Legend>
                <Knob view="655 656 103 63" cx={705} cy={695} value="250К" pointer="M702.500 683h7L706 677z"
                  labels={[['1К', 678, 713, -130], ['100К', 676, 673, -44], ['250К', 711, 663, 3], ['333К', 733, 673, 37],
                    ['500К', 741, 685, 68], ['1М', 731, 712, 130]]} />
              </Group>

              <Group $w={125}>
                <Legend $color="#a4a4a8">Синхронизация</Legend>
                <SyncGrid>
                  <SyncButton aria-label="Уровень">
                    <Icon w={18} h={18}>
                      <path d="M1 16.500q5 1 8-5t8-10" stroke="#e02020" strokeWidth="1.500" strokeDasharray="3 .6" />
                      <path d="M1 7.500h16" stroke="#0010f0" strokeDasharray="1 1" /><path d="M1 4l5 3.500L1 11z" fill="#0010f0" stroke="none" />
                    </Icon>
                  </SyncButton>
                  <SyncButton aria-label="Фронт" disabled>
                    <Icon w={18} h={18}>
                      <path d="M1 14.500h9v-12h7" stroke="#a0a0a4" strokeWidth="1.500" /><path d="M6.500 5v7" stroke="#a0a0a4" />
                      <path d="M3.500 8h6l-3-4z" fill="#a0a0a4" stroke="none" />
                    </Icon>
                  </SyncButton>
                  <SyncButton aria-label="Спад" $on disabled>
                    <Icon w={18} h={18}>
                      <path d="M1 3.500h6.500v12H17" stroke="#a0a0a4" strokeWidth="1.500" /><path d="M12.500 5v7" stroke="#a0a0a4" />
                      <path d="M9.500 9h6l-3 4z" fill="#a0a0a4" stroke="none" />
                    </Icon>
                  </SyncButton>
                  <SyncButton aria-label="Указать уровень">
                    <Icon w={20} h={20}>
                      <path d="M1 16.500q5 1 8-5t7-11" stroke="#e02020" strokeWidth="1.500" strokeDasharray="3 .6" />
                      <path d="M1 7.500h18" stroke="#0010f0" strokeDasharray="1 1" /><path d="M1 4l5 3.500L1 11z" fill="#0010f0" stroke="none" />
                      <path d="M10 7l7 6-1 4-4 1-1.500-5z" fill="#f8e800" />
                    </Icon>
                  </SyncButton>
                  <SyncSelect>
                    <PlainSelect aria-label="Канал синхронизации"><option>1</option></PlainSelect>
                    <Caret color="#a0a0a4" />
                  </SyncSelect>
                  <SyncButton aria-label="Диапазон" disabled>
                    <Icon w={18} h={18}>
                      <path d="M4 5.500h8l5-3M4 12.500h8l5 3" stroke="#a0a0a4" /><path d="M2 9h13" stroke="#a0a0a4" strokeDasharray="1 1" />
                      <path d="M0 5l4 4-4 4zM10 1h7l-3.500 4zM10 17h7l-3.500-4z" fill="#a0a0a4" stroke="none" />
                    </Icon>
                  </SyncButton>
                  <SyncButton aria-label="Сжать" disabled>
                    <Icon w={18} h={12}>
                      <path d="M0 6h5M13 6h5" stroke="#a0a0a4" strokeWidth="2" />
                      <path d="M4 1l5 5-5 5zM14 1L9 6l5 5z" fill="#a0a0a4" stroke="none" />
                    </Icon>
                  </SyncButton>
                </SyncGrid>
              </Group>

              <Group $w={134}>
                <Legend $color="#2f5fb0">Управление</Legend>
                <RunGrid>
                  <PauseButton $edge="#c0c0c4" aria-label="Пауза" disabled>
                    <svg width="12" height="15"><path d="M.5.5h4v14h-4zM7.500.500h4v14h-4z" fill="#a0a0a4" stroke="#707074" /></svg>
                  </PauseButton>
                  <RunButton $edge="#0a3a6c" aria-label="Синусоида">
                    <svg width="28" height="20" fill="none"><path d="M0 10Q7-8 14 10t14 0" stroke="#f01010" /></svg>
                  </RunButton>
                  <RunButton $edge="#00e800" aria-label="Поток">
                    <svg width="34" height="20" fill="none">
                      <path d="M1 5h2l1 3 2-5 2 3 2-2 1 4 2-5 2 3h2l1 2 2-5 2 3 2-2 1 4 2-5 2 3h2" stroke="#f01010" />
                      <path d="M1 15h3l1-3 2 5 2-3 2 2 1-4 2 5 2-3h2l1-2 2 5 2-3 2 2 1-4 2 4h2" stroke="#0010f0" />
                      <path d="M33 2v5l-4-2.500zM33 12v5l-4-2.500z" fill="#000080" />
                    </svg>
                  </RunButton>
                  <RunButton $edge="#0a3a6c" $span>
                    <svg width="11" height="18"><path d="M0 0l10 9L0 18z" fill="#00f000" stroke="#489048" /></svg>
                    Пуск
                  </RunButton>
                  <Reading>29.07</Reading>
                </RunGrid>
              </Group>
            </Groups>
          </Controls>
        </Page>
        <StatusBar>
          <StatusCell $w={189}>USB Осциллограф не подключен</StatusCell>
          <StatusCell />
          <StatusCell $w={48}>1.4</StatusCell>
        </StatusBar>
        <Taskbar>
          <TaskPart $grow={93} $color="#80c890" />
          <TaskPart $grow={993} $color="#80c0f0" />
          <TaskPart $grow={280} $color="#ffffff" />
        </Taskbar>
      </Frame>
    </>
  );
}
